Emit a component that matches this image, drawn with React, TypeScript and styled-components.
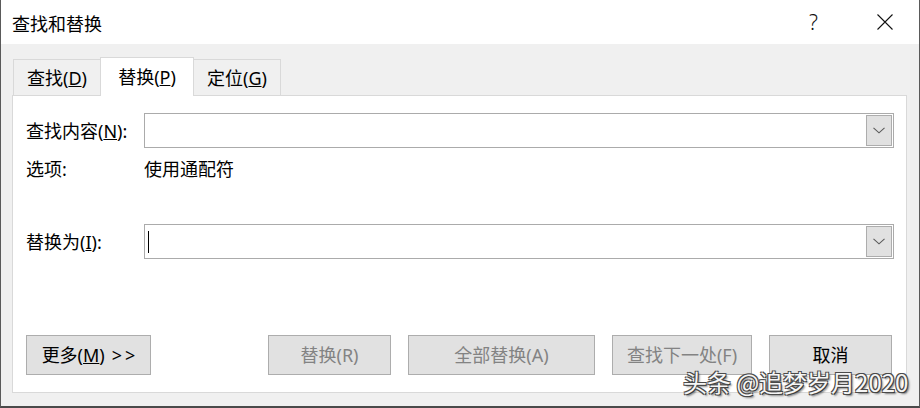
import styled, { createGlobalStyle } from "styled-components";

const GlobalStyle = createGlobalStyle`
  html, body {
    margin: 0;
    padding: 0;
    background: #3c3c3c;
  }
  * {
    box-sizing: border-box;
  }
`;

const Window = styled.div`
  position: relative;
  width: 920px;
  height: 408px;
  background: #f0f0f0;
  border-left: 1px solid #5a5a5a;
  border-right: 1px solid #5a5a5a;
  border-bottom: 2px solid #4a4a4a;
  font-family: "Noto Sans", "Noto Sans CJK SC", sans-serif;
  font-size: 18px;
  color: #000;
  overflow: hidden;
`;

const TitleBar = styled.div`
  display: flex;
  align-items: center;
  height: 44px;
  background: #fff;
  padding-left: 11px;
`;

const Title = styled.div`
  flex: 1;
  font-family: "Noto Sans CJK SC", sans-serif;
  font-size: 18px;
  line-height: 24px;
  padding-top: 1px;
`;

const CaptionButton = styled.div<{ $w: number }>`
  width: ${(p) => p.$w}px;
  height: 44px;
  display: flex;
  align-items: center;
  justify-content: center;
  font-size: 21px;
  font-weight: 300;
  color: #111;
`;

const Body = styled.div`
  padding: 13px 12px 0 11px;
`;

const TabStrip = styled.div`
  position: relative;
  z-index: 1;
  display: flex;
  align-items: flex-start;
  height: 39px;
  margin-bottom: -1px;
  padding-left: 1px;
`;

const Tab = styled.div<{ $active?: boolean; $w: number; $overlap?: boolean }>`
  width: ${(p) => p.$w}px;
  height: ${(p) => (p.$active ? 39 : 36)}px;
  margin-top: ${(p) => (p.$active ? 0 : 2)}px;
  margin-left: ${(p) => (p.$active || p.$overlap ? -1 : 0)}px;
  background: ${(p) => (p.$active ? "#fff" : "#f0f0f0")};
  border: 1px solid #d9d9d9;
  border-bottom: none;
  display: flex;
  align-items: center;
  justify-content: center;
  line-height: 24px;
  padding-bottom: ${(p) => (p.$active ? 1 : 0)}px;
`;

const Panel = styled.div`
  height: 298px;
  background: #fff;
  border: 1px solid #d9d9d9;
  padding: 17px 12px 17px 13px;
  display: flex;
  flex-direction: column;
`;

const FieldRow = styled.div<{ $gap?: number }>`
  display: grid;
  grid-template-columns: 118px 1fr;
  align-items: center;
  margin-top: ${(p) => p.$gap ?? 0}px;
`;

const Label = styled.div`
  line-height: 24px;
  white-space: nowrap;
`;

const Combo = styled.div`
  height: 35px;
  border: 1px solid #ababab;
  background: #fff;
  padding: 1px 1px 1px 2px;
  display: flex;
  align-items: center;
`;

const ComboText = styled.div`
  flex: 1;
  height: 100%;
  display: flex;
  align-items: center;
`;

const Caret = styled.span`
  display: block;
  width: 1px;
  height: 22px;
  margin-left: 1px;
  background: #000;
`;

const DropButton = styled.div`
  width: 26px;
  height: 31px;
  background: #e1e1e1;
  border: 1px solid #adadad;
  display: flex;
  align-items: center;
  justify-content: center;
`;

const ButtonRow = styled.div`
  margin-top: auto;
  margin-right: 2px;
  display: flex;
  justify-content: space-between;
`;

const ButtonGroup = styled.div`
  display: flex;
  gap: 17px;
`;

const Button = styled.div<{ $w: number; $disabled?: boolean }>`
  width: ${(p) => p.$w}px;
  height: 40px;
  background: #e1e1e1;
  border: 1px solid #adadad;
  display: flex;
  align-items: center;
  justify-content: center;
  line-height: 24px;
  color: ${(p) => (p.$disabled ? "#838383" : "#000")};
  white-space: nowrap;
`;

const Arrows = styled.span`
  margin-left: 7px;
  letter-spacing: 3px;
  margin-right: -3px;
`;

const Watermark = styled.div`
  position: absolute;
  left: 682px;
  top: 368px;
  font-family: "Noto Sans CJK SC", sans-serif;
  font-size: 24px;
  line-height: 28px;
  color: #f6f6f6;
  white-space: nowrap;
  text-shadow: -1px -1px 0 #4a4a4a, 1px -1px 0 #4a4a4a, -1px 1px 0 #4a4a4a,
    1px 1px 0 #3a3a3a, 2px 2px 2px rgba(0, 0, 0, 0.5);
`;

function Chevron() {
  return (
    <svg width="12" height="7" viewBox="0 0 12 7">
      <path d="M0.5 0.8 L6 5.8 L11.5 0.8" fill="none" stroke="#5a5a5a" strokeWidth="1.1" />
    </svg>
  );
}

function CloseIcon() {
  return (
    <svg width="16" height="16" viewBox="0 0 16 16">
      <path d="M0.5 0.5 L15.5 15.5 M15.5 0.5 L0.5 15.5" stroke="#111" strokeWidth="1.1" />
    </svg>
  );
}

export default function App() {
  return (
    <>
      <GlobalStyle />
      <Window>
        <TitleBar>
          <Title>查找和替换</Title>
          <CaptionButton $w={73}>?</CaptionButton>
          <CaptionButton $w={69}>
            <CloseIcon />
          </CaptionButton>
        </TitleBar>
        <Body>
          <TabStrip>
            <Tab $w={88}>
              查找(<u>D</u>)
            </Tab>
            <Tab $w={94} $active>
              替换(<u>P</u>)
            </Tab>
            <Tab $w={88} $overlap>
              定位(<u>G</u>)
            </Tab>
          </TabStrip>
          <Panel>
            <FieldRow>
              <Label>
                查找内容(<u>N</u>):
              </Label>
              <Combo>
                <ComboText />
                <DropButton>
                  <Chevron />
                </DropButton>
              </Combo>
            </FieldRow>
            <FieldRow $gap={9}>
              <Label>选项:</Label>
              <Label>使用通配符</Label>
            </FieldRow>
            <FieldRow $gap={43}>
              <Label>
                替换为(<u>I</u>):
              </Label>
              <Combo>
                <ComboText>
                  <Caret />
                </ComboText>
                <DropButton>
                  <Chevron />
                </DropButton>
              </Combo>
            </FieldRow>
            <ButtonRow>
              <Button $w={125}>
                更多(<u>M</u>)<Arrows>&gt;&gt;</Arrows>
              </Button>
              <ButtonGroup>
                <Button $w={123} $disabled>
                  替换(R)
                </Button>
                <Button $w={187} $disabled>
                  全部替换(A)
                </Button>
                <Button $w={140} $disabled>
                  查找下一处(F)
                </Button>
                <Button $w={123}>取消</Button>
              </ButtonGroup>
            </ButtonRow>
          </Panel>
        </Body>
        <Watermark>头条 @追梦岁月2020</Watermark>
      </Window>
    </>
  );
}
